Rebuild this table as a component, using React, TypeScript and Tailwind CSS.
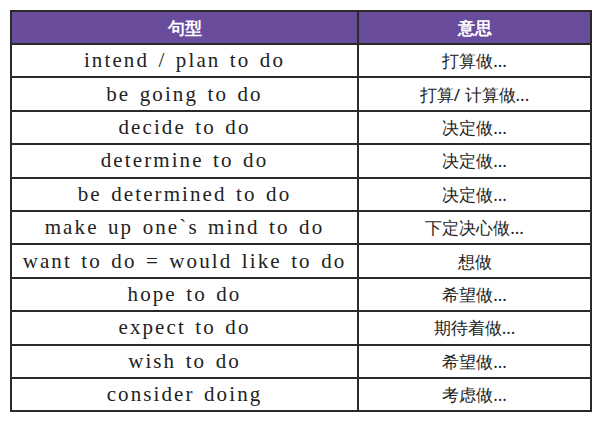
export default function App() {
  return (
    <div className="w-[600px] h-[421px] bg-white pt-[10px] pl-[10px] font-serif">
      <table className="border-collapse w-[580px] table-fixed">
        <colgroup>
          <col className="w-[347px]" />
          <col className="w-[233px]" />
        </colgroup>
        <thead>
          <tr className="h-[33px] bg-[#6a4c9c]">
            {headers.map((h) => (
              <th
                key={h}
                className="border-2 border-[#2a2a2a] text-white text-[17px] font-bold font-sans"
              >
                {h}
              </th>
            ))}
          </tr>
        </thead>
        <tbody>
          {rows.map(([en, zh]) => (
            <tr key={en} className="h-[33.4px]">
              <td className="border-2 border-[#2a2a2a] text-center text-[21px] text-[#222] leading-none font-[Liberation_Serif,serif] tracking-[0.1em] [word-spacing:0.1em]">
                {en}
              </td>
              <td className="border-2 border-[#2a2a2a] text-center text-[17px] text-[#222] leading-none font-sans">
                {zh}
              </td>
            </tr>
          ))}
        </tbody>
      </table>
    </div>
  );
}

const headers = ['句型', '意思'];

const rows: [string, string][] = [
  ['intend / plan to do', '打算做...'],
  ['be going to do', '打算/ 计算做...'],
  ['decide to do', '决定做...'],
  ['determine to do', '决定做...'],
  ['be determined to do', '决定做...'],
  ['make up one\u0060s mind to do', '下定决心做...'],
  ['want to do = would like to do', '想做'],
  ['hope to do', '希望做...'],
  ['expect to do', '期待着做...'],
  ['wish to do', '希望做...'],
  ['consider doing', '考虑做...'],
];
